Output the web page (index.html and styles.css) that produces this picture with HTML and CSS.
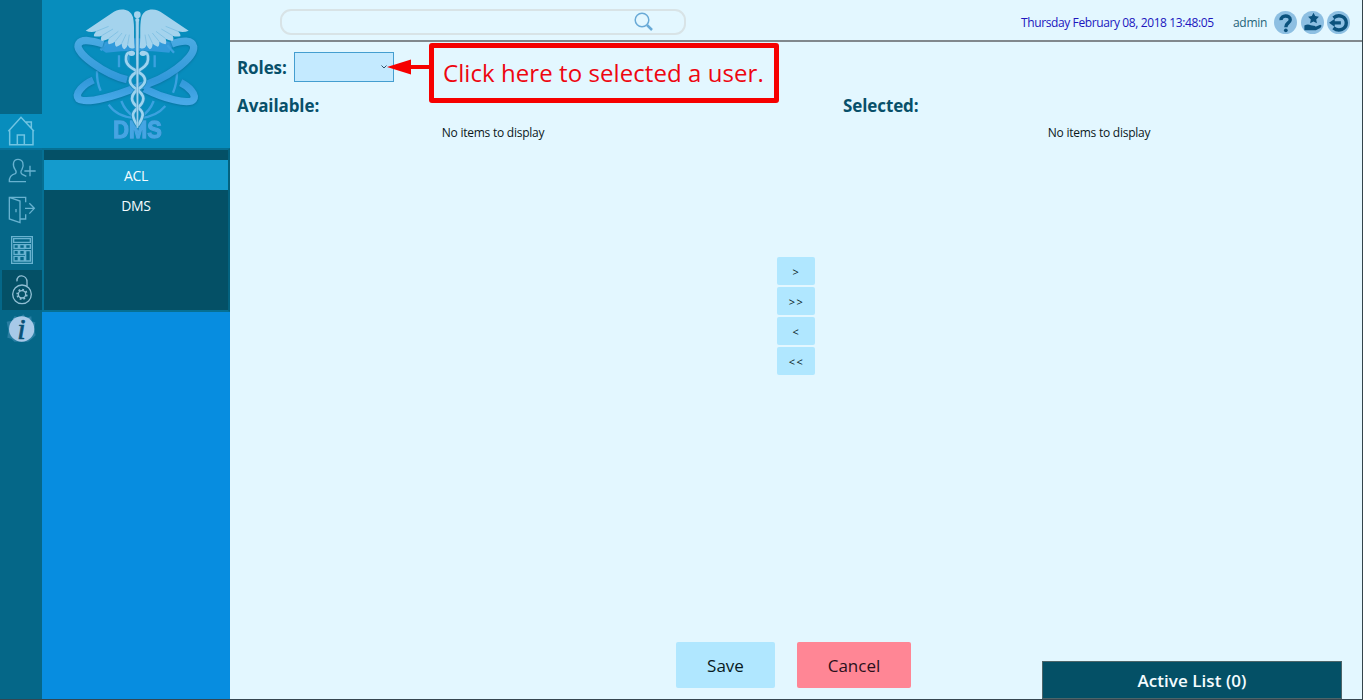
FILE: index.html
```html
<!DOCTYPE html>
<html lang="en">
<head>
<meta charset="utf-8">
<title>DMS</title>
<link rel="stylesheet" href="styles.css">
</head>
<body>
<div class="app">
  <nav class="rail">
    <div class="cell home"><svg viewBox="0 342 126 102"><path d="M25 394 63 352 102 394M80 371V366H94V386M29 391V434H99V391M52 434V405H73V434"/></svg></div>
    <div class="cell"><svg viewBox="0 135 126 120"><path d="M68 230H28Q27 211 46 206Q51 202 46 195C36 180 39 163 54 163S73 179 66 193Q59 203 67 208L79 214M73 198H107M90 182V214M63 230H78"/></svg></div>
    <div class="cell"><svg viewBox="0 255 126 120"><path d="M77 292V277H28V342L60 353V288L28 277M60 342H77V328M48 312V322M75 310H103M88 295 103 310 88 326"/></svg></div>
    <div class="cell"><svg viewBox="0 15 126 120"><path d="M35 35H97V115H35ZM41 41H91V52H41ZM42 59H55V70H42ZM59 59H73V70H59ZM77 59H91V70H77ZM42 76H55V88H42ZM59 76H73V88H59ZM42 94H55V108H42ZM59 94H73V108H59ZM77 77H91V108H77Z"/></svg></div>
    <div class="cell active"><svg viewBox="0 135 126 120"><path d="M51 169C49 145 82 149 81 172V184"/><circle cx="66" cy="208" r="28"/><circle cx="66" cy="208" r="11"/><path stroke-width="6" stroke-dasharray="5 6" d="M52 208A14 14 0 1 1 80 208A14 14 0 1 1 52 208"/></svg></div>
    <div class="cell info"><svg viewBox="0 255 126 120"><path class="halo" d="M20 290 36 287 44 273 57 278 70 268 78 278 94 274 95 289 106 292 103 312 107 331 96 341 84 350H43L34 341 22 338 25 316Z"/><circle cx="65" cy="312" r="38"/><text x="64" y="341">i</text></svg></div>
  </nav>
  <aside class="side">
    <div class="logo">
      <svg viewBox="126 0 564 444" role="img" aria-label="DMS">
        <defs>
          <linearGradient id="orbit" x1="0" y1="0" x2="0" y2="1"><stop offset="0" stop-color="#49a9e2"/><stop offset=".65" stop-color="#3298da"/><stop offset="1" stop-color="#48a9e8"/></linearGradient>
          <g id="wing">
            <path d="M404 143C400 105 405 83 399 52C391 24 355 23 335 40L257 92Q272 99 289 94Q280 103 282 109Q297 111 305 107Q300 118 306 123Q319 120 326 116Q322 130 327 133Q338 130 345 125Q344 138 350 140Q360 136 365 131Q366 146 374 148Q381 143 383 134Q390 151 404 143Z"/>
            <path class="feather" d="M289 94 326 79M305 107 339 87M326 116 355 94M345 125 366 99M365 131 378 103M383 134 388 104"/>
          </g>
        </defs>
        <g class="globe"><path class="band" d="M302 128Q408 102 522 128L508 158Q408 146 318 158L300 146Z"/><path d="M317 130 302 151M357 166V202M385 164V202M291 213Q290 247 302 272M464 166V202M531 215Q531 250 519 278M326 314Q350 350 403 354M364 303Q376 335 403 350M496 318Q470 349 423 354M461 303Q449 335 422 351M502 136 522 158"/></g>
        <g class="orbits">
          <path d="M381 239C315 224 220 157 236 131C246 115 276 122 310 132M515 132C548 120 577 119 581 140C585 175 496 240 420 258C350 287 262 313 236 297C222 281 250 253 280 240M433 266C487 293 567 317 580 299C591 284 567 260 542 248"/>
        </g>
        <use href="#wing"/>
        <use href="#wing" transform="translate(823 0) scale(-1 1)"/>
        <text x="340" y="414" textLength="145" lengthAdjust="spacingAndGlyphs">DMS</text>
        <g class="staff">
          <path class="snake-edge" d="M392 158Q377 155 378 179C379 210 436 213 435 242C434 266 396 267 396 296C397 322 430 323 428 345Q426 359 413 377M431 158Q446 155 444 179C443 210 390 213 390 242C390 266 429 268 430 296C429 322 399 325 399 345Q400 359 413 377"/>
          <path class="snake" d="M392 158Q377 155 378 179C379 210 436 213 435 242C434 266 396 267 396 296C397 322 430 323 428 345Q426 359 413 377M431 158Q446 155 444 179C443 210 390 213 390 242C390 266 429 268 430 296C429 322 399 325 399 345Q400 359 413 377"/>
          <ellipse cx="395" cy="160" rx="10" ry="8"/><ellipse cx="429" cy="160" rx="10" ry="8"/>
          <path class="rod" d="M407 57H417L415 384H410Z"/><circle cx="412" cy="44" r="10"/><circle cx="412" cy="60" r="6"/>
        </g>
      </svg>
    </div>
    <div class="menu"><a class="chosen">ACL</a><a>DMS</a></div>
  </aside>
  <main class="main">
    <header class="top">
      <div class="search"><svg viewBox="0 0 20 20"><circle cx="8" cy="8" r="6.8"/><path d="M13 13 18 18"/></svg></div>
      <div class="account">
        <span class="date">Thursday February 08, 2018 13:48:05</span>
        <span class="admin">admin</span>
        <svg class="round" viewBox="792 31 68 68"><circle cx="826" cy="65" r="34"/><path class="line" d="M813 58C811 42 841 42 840 57C839 67 827 66 827 79"/><circle class="ink" cx="827" cy="88" r="5.5"/></svg>
        <svg class="round" viewBox="872 31 68 68"><circle cx="906" cy="65" r="34"/><path class="ink" d="M909 36 914 46 925 48 917 56 919 67 909 62 899 67 901 56 893 48 904 46ZM882 74Q892 68 901 73L914 75Q918 79 906 81L929 72Q936 74 929 81L916 88H882Z"/></svg>
        <svg class="round" viewBox="953 31 68 68"><circle cx="987" cy="65" r="34"/><path class="line" d="M972 51C990 38 1010 49 1010 66C1010 85 988 94 972 81M973 66H994"/><path class="ink" d="M959 66 976 54V78Z"/></svg>
      </div>
    </header>
    <section class="work">
      <div class="roles"><label>Roles:</label><div class="select"><svg viewBox="0 0 6 4"><path d="M.5.5 3 3 5.5.5"/></svg></div></div>
      <div class="lists">
        <div class="list"><h2>Available:</h2><p>No items to display</p></div>
        <div class="move"><button>&gt;</button><button>&gt;&gt;</button><button>&lt;</button><button>&lt;&lt;</button></div>
        <div class="list"><h2>Selected:</h2><p>No items to display</p></div>
      </div>
      <div class="actions"><button class="save">Save</button><button class="cancel">Cancel</button></div>
    </section>
    <div class="callout"><span>Click here to selected a user.</span><svg viewBox="0 0 42 16"><path d="M0 8 24 .5V6H42V10H24V15.5Z"/></svg></div>
    <div class="active-list">Active List (0)</div>
  </main>
</div>
</body>
</html>
```
FILE: styles.css
```css
* { box-sizing: border-box; }
body { margin: 0; font-family: "Open Sans", "Noto Sans", sans-serif; }
.app { display: flex; width: 1363px; height: 700px; overflow: hidden; border-bottom: 1px solid #354650; background: #e3f7ff; }
.rail { width: 42px; padding-top: 114px; background: #056788; }
.cell { height: 40px; }
.cell svg { display: block; width: 42px; height: 40px; fill: none; stroke: #68b2d0; stroke-width: 4; }
.cell.home { height: 36px; background: #078dbd; border-bottom: 2px solid #067299; }
.cell.home svg { height: 34px; stroke: #70c4e2; stroke-width: 4.5; }
.cell.active { background: #045066; border: solid #056788; border-width: 0 0 0 2px; }
.cell.active svg { margin-left: -2px; stroke: #90bed3; }
.cell.info svg { stroke: none; fill: #a7c9e8; }
.cell.info .halo { fill: #287ea2; }
.cell.info text { font: italic 90px "Liberation Serif", serif; text-anchor: middle; fill: #075178; stroke: #075178; stroke-width: 2; }
.side { width: 188px; background: #078de0; }
.logo { height: 148px; background: #078dbd; }
.logo svg { display: block; width: 188px; height: 148px; }
.globe { fill: none; stroke: #3ba1df; stroke-width: 7; }
.globe .band { fill: #319adb; stroke: none; }
.orbits { fill: none; stroke: url(#orbit); stroke-width: 22; filter: drop-shadow(0 2px 3px #08709c); }
.logo use, .staff { fill: #a4d3ed; }
.feather { fill: none; stroke: #73b9df; stroke-width: 2; }
.snake-edge { fill: none; stroke: #218dbf; stroke-width: 13; }
.snake { fill: none; stroke: #9dd4f0; stroke-width: 8; }
.rod { stroke: #348fbd; stroke-width: 1; }
.logo text { font: bold 70px "Liberation Sans", sans-serif; fill: #46a5e3; stroke: #46a5e3; stroke-width: 4; filter: drop-shadow(0 0 2px #126a9b); }
.menu { height: 164px; padding: 10px 0 0; border: 2px solid #067093; border-right-color: #04627f; background: #045066; }
.menu a { display: block; height: 30px; line-height: 31px; text-align: center; color: #f4fcff; font-size: 14px; letter-spacing: -.35px; }
.menu .chosen { background: #149bcd; }
.main { position: relative; display: flex; flex-direction: column; width: 1133px; border-right: 1px solid #34444b; }
.top { display: flex; height: 42px; padding: 9px 12px 0 50px; justify-content: space-between; border-bottom: 2px solid #81888d; }
.search { width: 406px; height: 26px; border: 2px solid #d8e3e6; border-radius: 11px; }
.search svg { display: block; width: 20px; height: 20px; margin: 1px 0 0 352px; fill: none; stroke: #69aad7; stroke-width: 1.5; }
.search path { stroke-width: 2.5; }
.account { display: flex; align-items: center; height: 26px; color: #246478; font-size: 12px; white-space: nowrap; }
.date { width: 194px; margin-right: 18px; color: #2016be; letter-spacing: -.39px; }
.admin { width: 34px; margin-right: 7px; letter-spacing: -.3px; }
.round { width: 23px; height: 23px; margin-right: 3.5px; fill: #8dbfe2; }
.round:last-child { margin-right: 0; }
.line { fill: none; stroke: #0b527d; stroke-width: 10; }
.ink { fill: #0b527d; }
.work { display: flex; flex-direction: column; height: 657px; padding: 10px 6px 11px 7px; }
.roles { display: flex; align-items: center; height: 30px; color: #08506a; font-size: 17px; font-weight: 700; }
.roles label { width: 57px; letter-spacing: -.1px; }
.select { display: flex; width: 100px; height: 30px; align-items: center; justify-content: flex-end; padding-right: 6px; border: 1px solid #449ed0; background: #c4eaff; }
.select svg { width: 6px; height: 4px; fill: none; stroke: #30536a; }
.lists { display: grid; grid-template-columns: 512px 94px 512px; flex: 1; padding-top: 12px; }
h2 { margin: 0; color: #08506a; font-size: 17px; line-height: 24px; font-weight: 700; letter-spacing: -.1px; }
.list p { margin: 6px 0 0; line-height: 18px; text-align: center; font-size: 12px; color: #0b171b; letter-spacing: -.25px; }
.move { display: flex; flex-direction: column; gap: 2px; padding: 163px 0 0 28px; }
button { border: 0; border-radius: 2px; padding: 0; font-family: inherit; color: #081a22; background: #b0e7ff; }
.move button { width: 38px; height: 28px; padding: 1px 0 0 1px; font-size: 11px; letter-spacing: 1.5px; }
.actions { display: flex; gap: 22px; padding-left: 439px; }
.actions button { height: 46px; font-size: 17px; }
.actions .save { width: 99px; }
.actions .cancel { width: 114px; background: #ff8695; color: #2a101b; }
.callout { position: absolute; left: 199px; top: 43px; display: flex; align-items: center; width: 350px; height: 60px; padding: 0 0 2px 9px; border: 5px solid #f60000; border-radius: 3px; background: #e3f7ff; color: #ee0610; font: 24px "Open Sans", sans-serif; font-weight: 400; letter-spacing: .07px; white-space: nowrap; }
.callout svg { position: absolute; left: -47px; top: 11px; width: 42px; height: 16px; fill: #f60000; }
.active-list { position: absolute; left: 812px; bottom: 0; width: 300px; height: 38px; border: 1px solid #4d6569; background: #045066; color: #f4fcff; font-size: 17px; font-weight: 600; line-height: 37px; text-align: center; letter-spacing: .05px; }
```
